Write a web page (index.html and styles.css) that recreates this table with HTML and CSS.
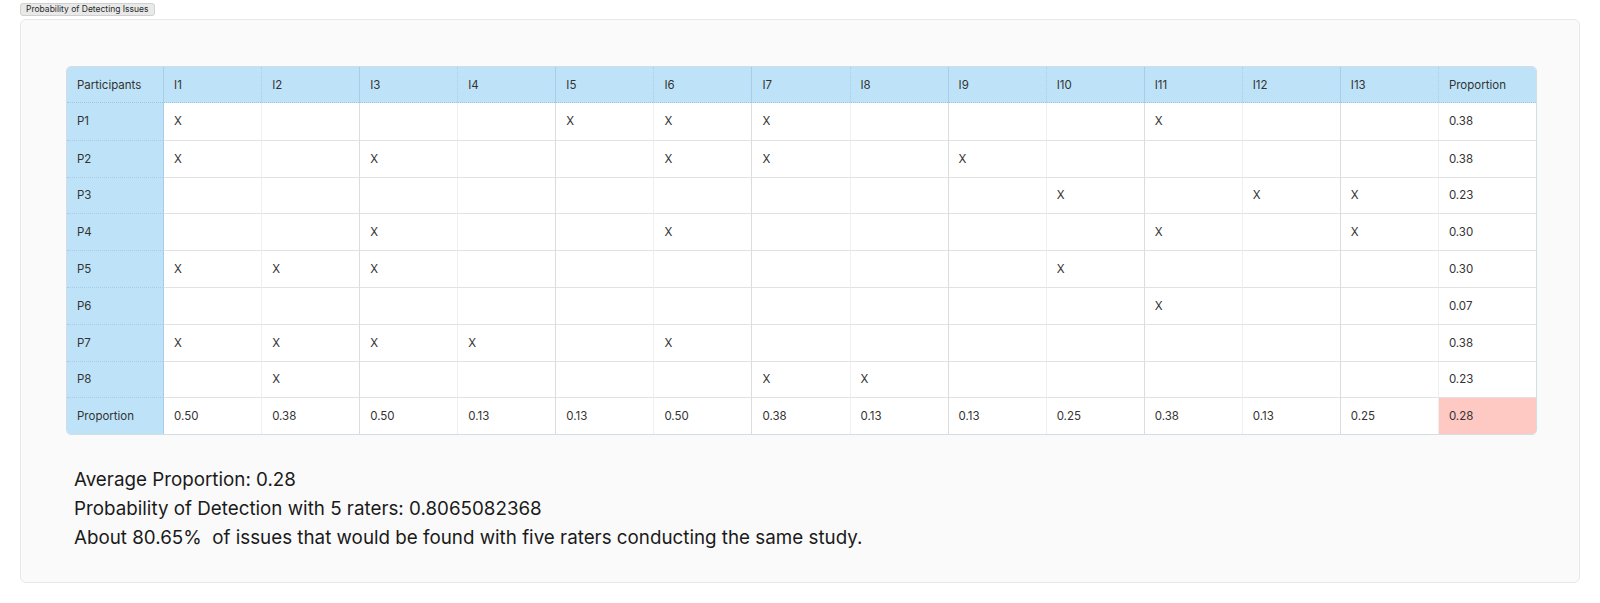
FILE: index.html
```html
<!DOCTYPE html>
<html>
<head>
<meta charset="utf-8">
<link rel="stylesheet" href="styles.css">
</head>
<body>
<div class="tab">Probability of Detecting Issues</div>
<div class="panel">
  <table class="grid">
    <colgroup>
      <col class="c-first"><col><col><col><col><col><col><col><col><col><col><col><col><col><col>
    </colgroup>
    <thead>
      <tr>
        <th class="rh">Participants</th>
        <th>I1</th><th class="odd">I2</th><th>I3</th><th class="odd">I4</th><th>I5</th><th class="odd">I6</th><th>I7</th><th class="odd">I8</th><th>I9</th><th class="odd">I10</th><th>I11</th><th class="odd">I12</th><th>I13</th><th class="odd">Proportion</th>
      </tr>
    </thead>
    <tbody>
      <tr><th class="rh">P1</th><td>X</td><td class="odd"></td><td></td><td class="odd"></td><td>X</td><td class="odd">X</td><td>X</td><td class="odd"></td><td></td><td class="odd"></td><td>X</td><td class="odd"></td><td></td><td class="odd">0.38</td></tr>
      <tr><th class="rh">P2</th><td>X</td><td class="odd"></td><td>X</td><td class="odd"></td><td></td><td class="odd">X</td><td>X</td><td class="odd"></td><td>X</td><td class="odd"></td><td></td><td class="odd"></td><td></td><td class="odd">0.38</td></tr>
      <tr><th class="rh">P3</th><td></td><td class="odd"></td><td></td><td class="odd"></td><td></td><td class="odd"></td><td></td><td class="odd"></td><td></td><td class="odd">X</td><td></td><td class="odd">X</td><td>X</td><td class="odd">0.23</td></tr>
      <tr><th class="rh">P4</th><td></td><td class="odd"></td><td>X</td><td class="odd"></td><td></td><td class="odd">X</td><td></td><td class="odd"></td><td></td><td class="odd"></td><td>X</td><td class="odd"></td><td>X</td><td class="odd">0.30</td></tr>
      <tr><th class="rh">P5</th><td>X</td><td class="odd">X</td><td>X</td><td class="odd"></td><td></td><td class="odd"></td><td></td><td class="odd"></td><td></td><td class="odd">X</td><td></td><td class="odd"></td><td></td><td class="odd">0.30</td></tr>
      <tr><th class="rh">P6</th><td></td><td class="odd"></td><td></td><td class="odd"></td><td></td><td class="odd"></td><td></td><td class="odd"></td><td></td><td class="odd"></td><td>X</td><td class="odd"></td><td></td><td class="odd">0.07</td></tr>
      <tr><th class="rh">P7</th><td>X</td><td class="odd">X</td><td>X</td><td class="odd">X</td><td></td><td class="odd">X</td><td></td><td class="odd"></td><td></td><td class="odd"></td><td></td><td class="odd"></td><td></td><td class="odd">0.38</td></tr>
      <tr><th class="rh">P8</th><td></td><td class="odd">X</td><td></td><td class="odd"></td><td></td><td class="odd"></td><td>X</td><td class="odd">X</td><td></td><td class="odd"></td><td></td><td class="odd"></td><td></td><td class="odd">0.23</td></tr>
      <tr class="last"><th class="rh">Proportion</th><td>0.50</td><td class="odd">0.38</td><td>0.50</td><td class="odd">0.13</td><td>0.13</td><td class="odd">0.50</td><td>0.38</td><td class="odd">0.13</td><td>0.13</td><td class="odd">0.25</td><td>0.38</td><td class="odd">0.13</td><td>0.25</td><td class="odd hot">0.28</td></tr>
    </tbody>
  </table>
  <div class="summary">
    <p>Average Proportion: 0.28</p>
    <p>Probability of Detection with 5 raters: 0.8065082368</p>
    <p>About 80.65%&nbsp; of issues that would be found with five raters conducting the same study.</p>
  </div>
</div>
</body>
</html>
```
FILE: styles.css
```css
html, body {
  margin: 0;
  padding: 0;
  background: #ffffff;
  font-family: Inter, "Noto Sans", sans-serif;
}

body {
  padding: 3px 20px 20px 20px;
}

.tab {
  display: block;
  width: fit-content;
  box-sizing: border-box;
  height: 13px;
  line-height: 11px;
  padding: 0 5px 0 5px;
  font-size: 8.5px;
  color: #2a2a2a;
  background: #e9e9e9;
  border: 1px solid #d0d0d0;
  border-radius: 3px;
}

.panel {
  box-sizing: border-box;
  width: 1560px;
  height: 564px;
  margin-top: 3px;
  padding: 46px 0 0 45px;
  background: #fafafa;
  border: 1px solid #e8e8e8;
  border-radius: 6px;
}

.grid {
  table-layout: fixed;
  width: 1471px;
  border-collapse: separate;
  border-spacing: 0;
  border: 1px solid #d4dde4;
  border-radius: 5px;
  overflow: hidden;
  font-size: 11.5px;
  color: #333333;
  background: #ffffff;
}

.grid col {
  width: 98px;
}

.grid .c-first {
  width: 96px;
}

.grid th,
.grid td {
  box-sizing: border-box;
  height: 36.8px;
  padding: 0 0 0 10px;
  text-align: left;
  font-weight: 400;
  vertical-align: middle;
  border-left: 1px solid #dcdcdc;
  border-top: 1px solid #e2e2e2;
  white-space: nowrap;
}

.grid td.odd {
  border-left-color: #efefef;
}

.grid thead th {
  background: #bee3f8;
  height: 36px;
  border-top: none;
  border-left: 1px solid #a6cde9;
  border-bottom: 1px dotted #9fc6e2;
}

.grid thead th.odd {
  border-left: 1px dotted #a9cfea;
}

.grid th.rh {
  background: #bee3f8;
  border-left: none;
  border-top: 1px dotted #a6cbe6;
}

.grid thead th.rh {
  border-top: none;
}

.grid tbody tr:first-child th,
.grid tbody tr:first-child td {
  border-top: none;
}

.grid tbody th.rh + td {
  border-left: 1px solid #a6cde9;
}

.grid td.hot {
  background: #fec8c3;
}

.summary {
  margin-top: 30px;
  padding-left: 8px;
  font-size: 18.8px;
  line-height: 29px;
  color: #1a1a1a;
}

.summary p {
  margin: 0;
}
```
